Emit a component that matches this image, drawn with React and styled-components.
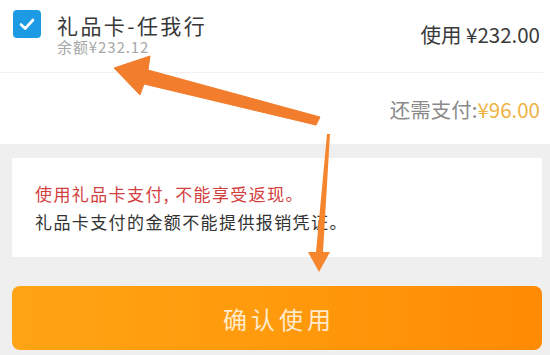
import React from "react";
import styled, { createGlobalStyle } from "styled-components";

const GlobalStyle = createGlobalStyle`
  html, body { margin: 0; padding: 0; }
  body {
    background: #efefef;
    font-family: "Noto Sans CJK SC", "Noto Sans", sans-serif;
  }
`;

const Page = styled.div`
  position: relative;
  width: 550px;
  height: 355px;
  overflow: hidden;
  background: #efefef;
`;

const TopSection = styled.section`
  background: #fff;
  height: 144px;
`;

const ItemRow = styled.div`
  display: flex;
  align-items: flex-start;
  height: 73px;
  margin-right: 7px;
  padding: 10px 3px 0 13px;
  box-sizing: border-box;
  border-bottom: 1px solid #f1f1f1;
`;

const Check = styled.div`
  width: 28px;
  height: 28px;
  border-radius: 4px;
  background: #1c9be4;
  display: flex;
  align-items: center;
  justify-content: center;
  flex-shrink: 0;
`;

const ItemInfo = styled.div`
  margin-left: 16px;
  display: flex;
  flex-direction: column;
  flex: 1;
`;

const Title = styled.div`
  font-size: 21px;
  line-height: 22px;
  color: #383838;
  letter-spacing: 2.4px;
  margin-top: 4px;
`;

const Balance = styled.div`
  font-size: 15px;
  line-height: 18px;
  letter-spacing: 0.9px;
  color: #a8a8a8;
  margin-top: 2px;
`;

const UseAmount = styled.div`
  font-size: 20.5px;
  line-height: 26px;
  color: #3a3a3a;
  margin-top: 11px;
`;

const PayRow = styled.div`
  display: flex;
  justify-content: flex-end;
  align-items: center;
  height: 72px;
  padding-right: 10px;
  font-size: 20.5px;
`;

const PayLabel = styled.span`
  color: #8a8a8a;
`;

const PayValue = styled.span`
  color: #efb244;
`;

const GraySection = styled.section`
  padding: 14px 8px 0 12px;
`;

const NoticeCard = styled.div`
  background: #fff;
  height: 99px;
  padding-left: 23px;
  display: flex;
  flex-direction: column;
  justify-content: center;
  gap: 6px;
  box-sizing: border-box;
`;

const NoticeLine = styled.div`
  font-size: 17px;
  line-height: 22px;
  letter-spacing: 1.4px;
  color: ${(p) => (p.$warn ? "#d2403e" : "#333")};
`;

const ConfirmButton = styled.button`
  display: flex;
  align-items: center;
  justify-content: center;
  width: 100%;
  height: 64px;
  margin-top: 29px;
  border: none;
  border-radius: 8px;
  background: linear-gradient(90deg, #ffa414 0%, #ff9a0c 50%, #ff8a04 100%);
  color: #ffeacb;
  font-family: inherit;
  font-size: 24px;
  letter-spacing: 4px;
  padding: 0 0 0 4px;
`;

const Overlay = styled.svg`
  position: absolute;
  left: 0;
  top: 0;
  pointer-events: none;
`;

export default function App() {
  return (
    <>
      <GlobalStyle />
      <Page>
        <TopSection>
          <ItemRow>
            <Check>
              <svg width="18" height="18" viewBox="0 0 18 18">
                <path d="M3 9.5 L7.2 13.5 L15 5" fill="none" stroke="#fff" strokeWidth="2.6" strokeLinecap="round" strokeLinejoin="round" />
              </svg>
            </Check>
            <ItemInfo>
              <Title>礼品卡-任我行</Title>
              <Balance>余额¥232.12</Balance>
            </ItemInfo>
            <UseAmount>使用 ¥232.00</UseAmount>
          </ItemRow>
          <PayRow>
            <PayLabel>还需支付:</PayLabel>
            <PayValue>¥96.00</PayValue>
          </PayRow>
        </TopSection>
        <GraySection>
          <NoticeCard>
            <NoticeLine $warn>使用礼品卡支付, 不能享受返现。</NoticeLine>
            <NoticeLine>礼品卡支付的金额不能提供报销凭证。</NoticeLine>
          </NoticeCard>
          <ConfirmButton>确认使用</ConfirmButton>
        </GraySection>
        <Overlay width="550" height="355" viewBox="0 0 550 355">
          <polygon points="320,117 316,125 144,84 140,95 114,68 150,56 148,70" fill="#f27d2c" strokeLinejoin="round" stroke="#f27d2c" strokeWidth="1" />
          <polygon points="327,134 330,134 323,252 330,252 319,272 308,252 316,252" fill="#f5862e" />
        </Overlay>
      </Page>
    </>
  );
}
